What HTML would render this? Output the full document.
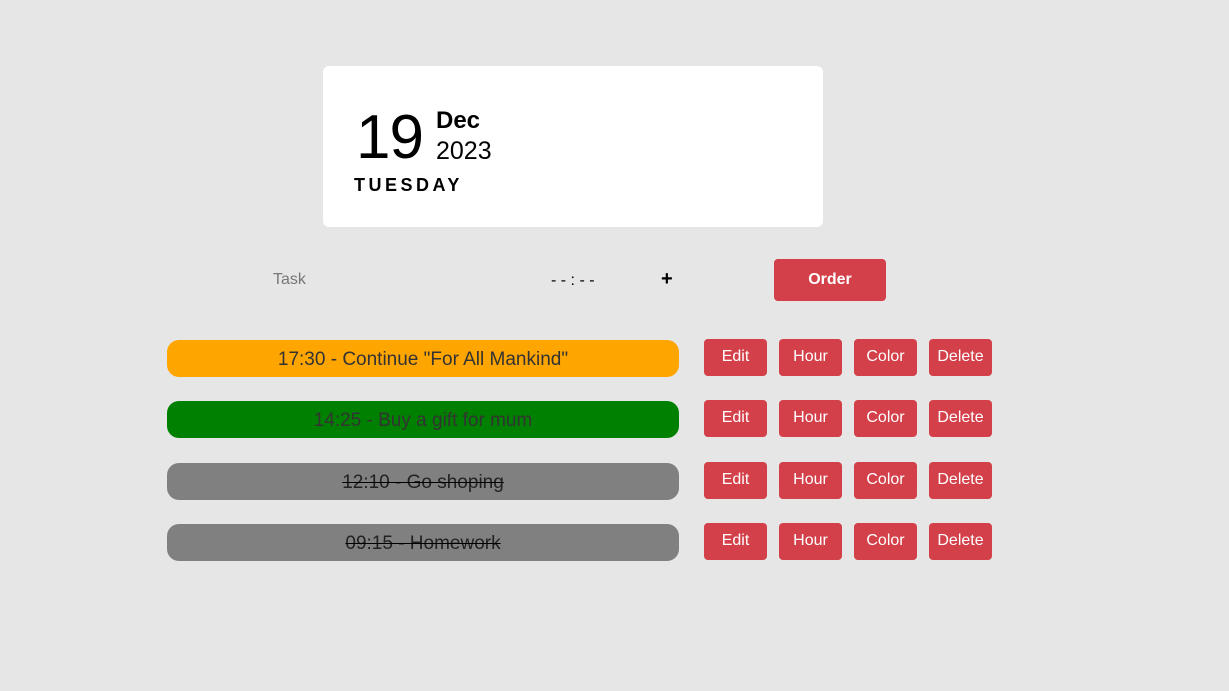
<!DOCTYPE html>
<html><head><style>
*{margin:0;padding:0;box-sizing:border-box}
body{width:1229px;height:691px;background:#e6e6e6;font-family:"Liberation Sans",sans-serif;position:relative;overflow:hidden}
.card{position:absolute;left:323px;top:66px;width:500px;height:161px;background:#fff;border-radius:6px}
.d19{position:absolute;left:33px;top:37px;font-size:62px;line-height:70px;color:#000;letter-spacing:-1px}
.mon{position:absolute;left:113px;top:41px;font-size:24px;font-weight:bold}
.yr{position:absolute;left:113px;top:71px;font-size:25px}
.day{position:absolute;left:31px;top:109px;font-size:18px;font-weight:bold;letter-spacing:3.5px}
.abs{position:absolute}
.btn{position:absolute;background:#d3404a;color:#fff;border-radius:4px;font-size:16px;text-align:center;height:37px;line-height:36px;width:63px}
.task{position:absolute;left:167px;width:512px;height:37px;border-radius:12px;text-align:center;font-size:19px;line-height:39px;color:#333}
.done{text-decoration:line-through;text-decoration-color:#000;color:#222}
</style></head><body>
<div class="card">
<div class="d19">19</div><div class="mon">Dec</div><div class="yr">2023</div><div class="day">TUESDAY</div>
</div>
<div class="abs" style="left:273px;top:271px;font-size:16px;color:#777">Task</div>
<div class="abs" style="left:551px;top:272px;font-size:16px;">- - : - -</div>
<div class="abs" style="left:661px;top:268px;font-size:20px;font-weight:bold">+</div>
<div class="btn" style="left:774px;top:259px;width:112px;height:42px;line-height:41px;font-weight:bold">Order</div>

<div class="task" style="top:340px;background:#ffa500">17:30 - Continue "For All Mankind"</div>
<div class="task" style="top:401px;background:#008000">14:25 - Buy a gift for mum</div>
<div class="task done" style="top:463px;background:#808080">12:10 - Go shoping</div>
<div class="task done" style="top:524px;background:#808080">09:15 - Homework</div>

<div class="btn" style="left:704px;top:339px">Edit</div><div class="btn" style="left:779px;top:339px">Hour</div><div class="btn" style="left:854px;top:339px">Color</div><div class="btn" style="left:929px;top:339px">Delete</div>
<div class="btn" style="left:704px;top:400px">Edit</div><div class="btn" style="left:779px;top:400px">Hour</div><div class="btn" style="left:854px;top:400px">Color</div><div class="btn" style="left:929px;top:400px">Delete</div>
<div class="btn" style="left:704px;top:462px">Edit</div><div class="btn" style="left:779px;top:462px">Hour</div><div class="btn" style="left:854px;top:462px">Color</div><div class="btn" style="left:929px;top:462px">Delete</div>
<div class="btn" style="left:704px;top:523px">Edit</div><div class="btn" style="left:779px;top:523px">Hour</div><div class="btn" style="left:854px;top:523px">Color</div><div class="btn" style="left:929px;top:523px">Delete</div>
</body></html>
